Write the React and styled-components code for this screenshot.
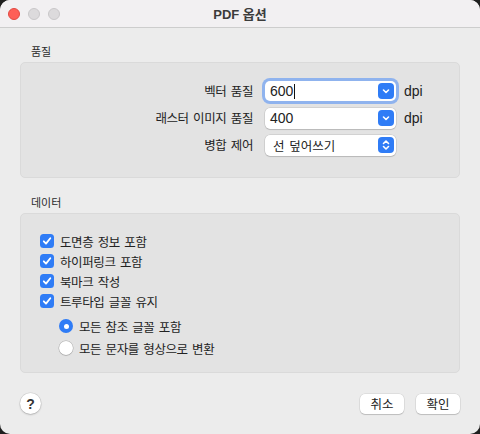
import React from 'react';
import styled, { createGlobalStyle } from 'styled-components';

const Global = createGlobalStyle`
  html, body { margin: 0; padding: 0; background: #1f1f1f; }
  body {
    font-family: "Noto Sans CJK KR", "Liberation Sans", sans-serif;
    color: #222;
  }
`;

const Window = styled.div`
  width: 480px;
  height: 434px;
  background: #ececec;
  border-radius: 10px;
  overflow: hidden;
  display: flex;
  flex-direction: column;
`;

const TitleBar = styled.div`
  height: 28px;
  flex: none;
  background: #f2f0f2;
  border-bottom: 1px solid #cdcdcd;
  box-sizing: border-box;
  display: flex;
  align-items: center;
  position: relative;
  justify-content: center;
`;

const Lights = styled.div`
  position: absolute;
  left: 8px;
  top: 8px;
  display: flex;
  gap: 8px;
`;

const Light = styled.span`
  width: 12px;
  height: 12px;
  border-radius: 50%;
  box-sizing: border-box;
  background: ${p => p.$red ? '#fe5f57' : '#dcdadc'};
  border: 0.5px solid ${p => p.$red ? '#e14942' : '#c9c7c9'};
`;

const Title = styled.div`
  font-size: 13px;
  font-weight: 700;
  color: #3b3b3b;
  font-family: "Liberation Sans", "Noto Sans CJK KR", sans-serif;
`;

const Body = styled.div`
  flex: none;
  padding: 16px 20px 0;
  display: flex;
  flex-direction: column;
`;

const GroupLabel = styled.div`
  font-size: 11px;
  line-height: 14px;
  padding-left: 11px;
  margin-bottom: 4px;
  color: #2b2b2b;
`;

const Group = styled.div`
  background: #e3e3e3;
  border: 1px solid #dadada;
  border-radius: 5px;
  box-sizing: border-box;
  height: ${p => p.$h}px;
  margin-bottom: ${p => p.$mb || 0}px;
`;

const FormGrid = styled.div`
  display: grid;
  grid-template-columns: 232px 131px auto;
  column-gap: 12px;
  row-gap: 5px;
  padding-top: 17px;
  align-items: center;
`;

const FieldLabel = styled.div`
  font-size: 12.5px;
  letter-spacing: -0.4px;
  word-spacing: 2px;
  text-align: right;
  line-height: 22px;
`;

const Field = styled.div`
  height: ${p => p.$h || 20}px;
  background: #fff;
  border-radius: 5px;
  box-shadow: ${p => p.$focus
    ? '0 0 0 3px #8fb3ee, 0 0 0 0.5px #7da6eb'
    : '0 0 0 0.5px rgba(0,0,0,0.15), 0 1px 1px rgba(0,0,0,0.12)'};
  display: flex;
  align-items: center;
  padding: 0 2px 0 ${p => p.$pl || 5}px;
  box-sizing: border-box;
  font-size: ${p => p.$fs || 14}px;
  word-spacing: 2px;
  font-family: ${p => p.$num ? '"Liberation Sans", sans-serif' : 'inherit'};
`;

const FieldText = styled.span`
  flex: 1;
  display: flex;
  align-items: center;
`;

const Caret = styled.span`
  width: 1px;
  height: 15px;
  background: #111;
  margin-left: 1px;
`;

const Stepper = styled.span`
  width: 16px;
  height: 16px;
  border-radius: 4px;
  background: #2f7cf6;
  display: flex;
  align-items: center;
  justify-content: center;
  flex: none;
`;

const Unit = styled.div`
  font-size: 14px;
  font-family: "Liberation Sans", sans-serif;
  margin-left: -4px;
`;

const ChecksList = styled.div`
  padding: 17px 0 0 19px;
  display: flex;
  flex-direction: column;
`;

const CheckRow = styled.label`
  display: flex;
  align-items: center;
  gap: 6px;
  height: 20px;
  font-size: 12.5px;
  letter-spacing: -0.4px;
  word-spacing: 2px;
  padding-left: ${p => p.$indent || 0}px;
  margin-top: ${p => p.$mt || 0}px;
`;

const CheckBox = styled.span`
  width: 14px;
  height: 14px;
  border-radius: 3.5px;
  background: #2f7cf6;
  display: flex;
  align-items: center;
  justify-content: center;
`;

const Radio = styled.span`
  width: 14px;
  height: 14px;
  border-radius: 50%;
  box-sizing: border-box;
  background: ${p => p.$on ? '#2f7cf6' : '#fff'};
  box-shadow: ${p => p.$on ? 'none' : '0 0 0 0.5px rgba(0,0,0,0.25), 0 1px 1px rgba(0,0,0,0.1)'};
  display: flex;
  align-items: center;
  justify-content: center;
  &::after {
    content: '';
    width: 5px;
    height: 5px;
    border-radius: 50%;
    background: #fff;
    display: ${p => p.$on ? 'block' : 'none'};
  }
`;

const Footer = styled.div`
  display: flex;
  align-items: center;
  padding: 20px 20px 0 20px;
`;

const Help = styled.div`
  width: 21px;
  height: 21px;
  border-radius: 50%;
  background: #fff;
  box-shadow: 0 0 0 0.5px rgba(0,0,0,0.12), 0 1px 2px rgba(0,0,0,0.18);
  display: flex;
  align-items: center;
  justify-content: center;
  font-size: 14px;
  font-weight: 700;
  font-family: "Liberation Sans", sans-serif;
  color: #333;
`;

const Spacer = styled.div`
  flex: 1;
`;

const Button = styled.button`
  width: 44px;
  height: 20px;
  border: none;
  border-radius: 5px;
  background: #fff;
  box-shadow: 0 0 0 0.5px rgba(0,0,0,0.12), 0 1px 1px rgba(0,0,0,0.15);
  font-family: "Noto Sans CJK KR", sans-serif;
  font-size: 12.5px;
  color: #222;
  padding: 0;
  margin-left: 12px;
  display: flex;
  align-items: center;
  justify-content: center;
`;

const Chevron = ({ up }) => (
  <svg width="10" height="12" viewBox="0 0 10 12">
    {up && <path d="M2.5 4.5 L5 2 L7.5 4.5" fill="none" stroke="#fff" strokeWidth="1.6" strokeLinecap="round" strokeLinejoin="round" />}
    <path d={up ? 'M2.5 7.5 L5 10 L7.5 7.5' : 'M2.5 5 L5 7.5 L7.5 5'} fill="none" stroke="#fff" strokeWidth="1.6" strokeLinecap="round" strokeLinejoin="round" />
  </svg>
);

const Check = () => (
  <svg width="10" height="10" viewBox="0 0 10 10">
    <path d="M1.8 5.3 L4 7.6 L8.3 2.2" fill="none" stroke="#fff" strokeWidth="1.8" strokeLinecap="round" strokeLinejoin="round" />
  </svg>
);

const checks = ['도면층 정보 포함', '하이퍼링크 포함', '북마크 작성', '트루타입 글꼴 유지'];

export default function App() {
  return (
    <>
      <Global />
      <Window>
        <TitleBar>
          <Lights>
            <Light $red />
            <Light />
            <Light />
          </Lights>
          <Title>PDF 옵션</Title>
        </TitleBar>
        <Body>
          <GroupLabel>품질</GroupLabel>
          <Group $h={116} $mb={17}>
            <FormGrid>
              <FieldLabel>벡터 품질</FieldLabel>
              <Field $focus $num>
                <FieldText>600<Caret /></FieldText>
                <Stepper><Chevron /></Stepper>
              </Field>
              <Unit>dpi</Unit>
              <FieldLabel>래스터 이미지 품질</FieldLabel>
              <Field $num $h={21}>
                <FieldText>400</FieldText>
                <Stepper><Chevron /></Stepper>
              </Field>
              <Unit>dpi</Unit>
              <FieldLabel>병합 제어</FieldLabel>
              <Field $h={21} $pl={8} $fs={12.5}>
                <FieldText>선 덮어쓰기</FieldText>
                <Stepper><Chevron up /></Stepper>
              </Field>
              <div />
            </FormGrid>
          </Group>
          <GroupLabel>데이터</GroupLabel>
          <Group $h={160}>
            <ChecksList>
              {checks.map(c => (
                <CheckRow key={c}>
                  <CheckBox><Check /></CheckBox>
                  {c}
                </CheckRow>
              ))}
              <CheckRow $indent={19} $mt={5}>
                <Radio $on />
                모든 참조 글꼴 포함
              </CheckRow>
              <CheckRow $indent={19} $mt={2}>
                <Radio />
                모든 문자를 형상으로 변환
              </CheckRow>
            </ChecksList>
          </Group>
        </Body>
        <Footer>
          <Help>?</Help>
          <Spacer />
          <Button>취소</Button>
          <Button>확인</Button>
        </Footer>
      </Window>
    </>
  );
}
